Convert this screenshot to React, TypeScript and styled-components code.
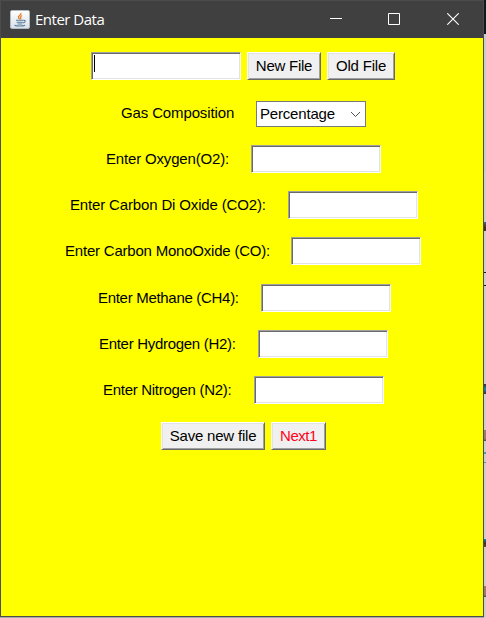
import React from "react";
import styled, { createGlobalStyle } from "styled-components";

const GlobalStyle = createGlobalStyle`
  * { box-sizing: border-box; }
  html, body { margin: 0; padding: 0; overflow: hidden; }
  body { background: #cfcbcb; font-family: "Liberation Sans", Arial, sans-serif; }
`;

const Desktop = styled.div`
  display: flex;
  width: 486px;
  height: 618px;
  background: #a9a9a5;
`;

const Window = styled.main`
  display: flex;
  flex-direction: column;
  width: 484px;
  height: 617px;
  border: 1px solid #4c4c4c;
  background: #ffff00;
`;

const TitleBar = styled.header`
  display: flex;
  align-items: center;
  height: 37px;
  flex: none;
  padding-left: 9px;
  background: #404040;
  color: #fff;
`;

const Title = styled.h1`
  flex: 1;
  margin: 0 0 1px 5px;
  font: 400 15px/20px "Open Sans", "Noto Sans", sans-serif;
  letter-spacing: -0.5px;
`;

const WindowButton = styled.button<{ $width: number }>`
  display: flex;
  align-self: flex-start;
  align-items: center;
  justify-content: center;
  width: ${(p) => p.$width}px;
  height: 36px;
  padding: 0;
  border: 0;
  background: none;
  color: #fff;
`;

const Form = styled.form`
  display: flex;
  flex-direction: column;
  font-size: 15px;
  line-height: 18px;
  color: #000;
`;

const Row = styled.div<{ $top: number; $left: number }>`
  display: flex;
  height: 28px;
  margin-top: ${(p) => p.$top}px;
  padding-left: ${(p) => p.$left}px;
`;

const Label = styled.label<{ $width: number; $spacing: number; $padTop?: number }>`
  width: ${(p) => p.$width}px;
  flex: none;
  padding-top: ${(p) => p.$padTop ?? 5}px;
  white-space: nowrap;
  letter-spacing: ${(p) => p.$spacing}px;
`;

const Field = styled.div<{ $width: number }>`
  width: ${(p) => p.$width}px;
  height: 28px;
  flex: none;
  border: 1px solid;
  border-color: #a0a0a0 #fff #fff #a0a0a0;
  background: #fff;
  box-shadow: inset 1px 1px #696969, inset -1px -1px #e3e3e3;
`;

const Caret = styled.span`
  display: block;
  width: 1px;
  height: 17px;
  margin: 2px 0 0 2px;
  background: #000;
`;

const Buttons = styled.div`
  display: flex;
  gap: 6px;
  margin-left: 6px;
`;

const PushButton = styled.button<{ $width: number; $spacing: number; $color?: string }>`
  width: ${(p) => p.$width}px;
  height: 28px;
  flex: none;
  padding: 0;
  border: 1px solid;
  border-color: #fff #696969 #696969 #fff;
  background: #f0f0f0;
  box-shadow: inset 1px 1px #e3e3e3, inset -1px -1px #a0a0a0;
  color: ${(p) => p.$color ?? "#000"};
  font: 15px/18px "Liberation Sans", Arial, sans-serif;
  letter-spacing: ${(p) => p.$spacing}px;
  white-space: nowrap;
`;

const Choice = styled.div`
  display: flex;
  align-items: center;
  justify-content: space-between;
  width: 110px;
  height: 26px;
  padding: 0 4px 0 3px;
  border: 1px solid #7a7a7a;
  background: #fff;
  letter-spacing: -0.18px;
`;

const Backdrop = styled.aside`
  display: flex;
  flex-direction: column;
  width: 2px;
  height: 618px;
  background: linear-gradient(#101920 0 34px, #cbcbcb 34px 172px, #d1cdcd 172px);
`;

const Mark = styled.i<{ $gap: number; $height: number; $color: string }>`
  display: block;
  flex: none;
  width: 2px;
  height: ${(p) => p.$height}px;
  margin-top: ${(p) => p.$gap}px;
  background: ${(p) => p.$color};
`;

const marks = [
  [222, 9, "linear-gradient(#32679a, #552718 60%, #333)"],
  [41, 1, "#171717"],
  [12, 1, "#171717"],
  [98, 10, "linear-gradient(#402b26, #1683bd, #402b26)"],
  [36, 11, "linear-gradient(#a07770 80%, #274c60)"],
  [11, 2, "#4796bd"],
  [8, 1, "#4796bd"],
  [76, 8, "linear-gradient(#1683bd, #402b26, #6c4330)"],
  [39, 11, "linear-gradient(#a07770 80%, #274c60)"],
] as const;

const gases = [
  { text: "Enter Oxygen(O2):", top: 16, left: 105, width: 145, spacing: -0.17 },
  { text: "Enter Carbon Di Oxide (CO2):", top: 18, left: 69, width: 218, spacing: -0.15 },
  { text: "Enter Carbon MonoOxide (CO):", top: 18, left: 64, width: 226, spacing: -0.21 },
  { text: "Enter Methane (CH4):", top: 19, left: 97, width: 163, spacing: -0.3 },
  { text: "Enter Hydrogen (H2):", top: 18, left: 98, width: 159, spacing: -0.3 },
  { text: "Enter Nitrogen (N2):", top: 18, left: 102, width: 151, spacing: -0.29 },
];

const JavaIcon = () => (
  <svg width="20" height="19" viewBox="0 0 20 19" fill="none">
    <defs>
      <linearGradient id="tile" x1="0" y1="0" x2="0" y2="1">
        <stop stopColor="#fff" />
        <stop offset="1" stopColor="#d9e0e6" />
      </linearGradient>
    </defs>
    <rect x=".5" y=".5" width="19" height="18" rx="1.5" fill="url(#tile)" stroke="#aebbc5" />
    <path d="M10.8 3C12 5 7.8 5.7 8.4 7.3 8.6 8 9.5 8.5 9.4 9.3M12 5.5C9.2 6.8 11.8 7.5 10.3 9.2" stroke="#e07a2c" strokeWidth="1.3" />
    <path d="M6 10.3h7.2M6.6 12.2h6.3M7.5 14h4.7M13.3 10.2c3-.2 2 2.4-.2 2.7M4.5 15.2c2 1.2 8.4 1.1 10.6 0" stroke="#587c9c" strokeWidth="1.1" />
  </svg>
);

export default function App() {
  return (
    <>
      <GlobalStyle />
      <Desktop>
        <Window>
          <TitleBar>
            <JavaIcon />
            <Title>Enter Data</Title>
            <WindowButton $width={58} aria-label="Minimize">
              <svg width="12" height="12"><path d="M0 5.5h12" stroke="currentColor" /></svg>
            </WindowButton>
            <WindowButton $width={58} aria-label="Maximize">
              <svg width="12" height="12"><path d="M.5.5h11v11H.5z" fill="none" stroke="currentColor" /></svg>
            </WindowButton>
            <WindowButton $width={60} aria-label="Close">
              <svg width="12" height="12"><path d="m.3.3 11.4 11.4M11.7.3.3 11.7" stroke="currentColor" strokeWidth="1.1" /></svg>
            </WindowButton>
          </TitleBar>
          <Form onSubmit={(e) => e.preventDefault()}>
            <Row $top={14} $left={90}>
              <Field $width={150}><Caret /></Field>
              <Buttons>
                <PushButton $width={74} $spacing={-0.25}>New File</PushButton>
                <PushButton $width={68} $spacing={-0.2}>Old File</PushButton>
              </Buttons>
            </Row>
            <Row $top={21} $left={120}>
              <Label $width={135} $spacing={-0.13} $padTop={3}>Gas Composition</Label>
              <Choice>
                Percentage
                <svg width="11" height="7"><path d="m1 1 4.5 4.5L10 1" fill="none" stroke="#505050" /></svg>
              </Choice>
            </Row>
            {gases.map((g) => (
              <Row key={g.text} $top={g.top} $left={g.left}>
                <Label $width={g.width} $spacing={g.spacing}>{g.text}</Label>
                <Field $width={130} />
              </Row>
            ))}
            <Row $top={18} $left={154}>
              <Buttons>
                <PushButton $width={104} $spacing={-0.2}>Save new file</PushButton>
                <PushButton $width={55} $spacing={-0.45} $color="#ff0020">Next1</PushButton>
              </Buttons>
            </Row>
          </Form>
        </Window>
        <Backdrop>
          {marks.map(([gap, height, color], i) => (
            <Mark key={i} $gap={gap} $height={height} $color={color} />
          ))}
        </Backdrop>
      </Desktop>
    </>
  );
}
